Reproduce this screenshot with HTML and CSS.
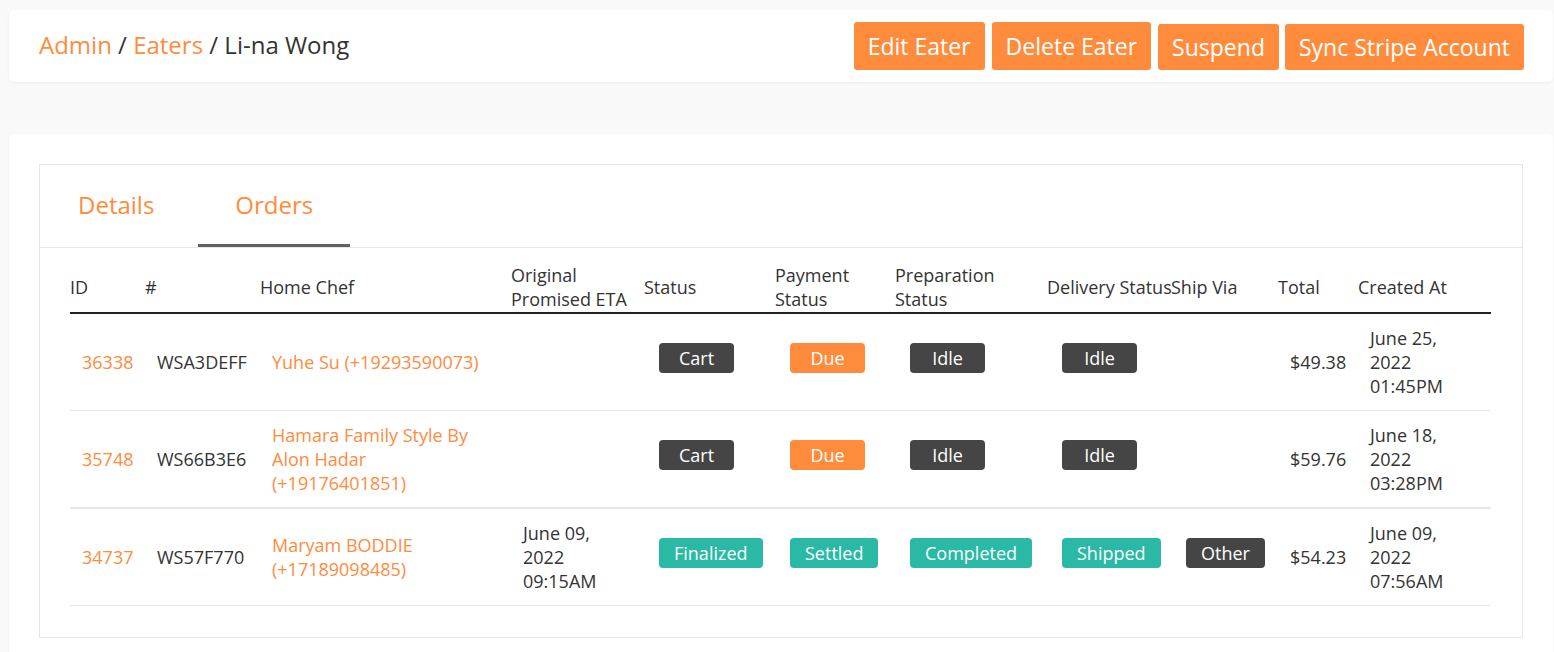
FILE: index.html
```html
<!DOCTYPE html>
<html>
<head>
<meta charset="utf-8">
<link rel="stylesheet" href="styles.css">
</head>
<body>
<div class="page">
  <header class="topbar">
    <div class="crumbs"><a class="link">Admin</a> / <a class="link">Eaters</a> / Li-na Wong</div>
    <div class="actions">
      <button class="btn btn-tall">Edit Eater</button>
      <button class="btn btn-tall">Delete Eater</button>
      <button class="btn">Suspend</button>
      <button class="btn">Sync Stripe Account</button>
    </div>
  </header>

  <main class="card">
    <div class="panel">
      <nav class="tabs">
        <div class="tab first">Details</div>
        <div class="tab active">Orders</div>
      </nav>
      <div class="table-wrap">
        <table class="orders">
          <colgroup>
            <col style="width:75px"><col style="width:115px"><col style="width:251px"><col style="width:133px"><col style="width:131px"><col style="width:120px"><col style="width:152px"><col style="width:124px"><col style="width:107px"><col style="width:80px"><col style="width:133px">
          </colgroup>
          <thead>
            <tr>
              <th>ID</th><th>#</th><th>Home Chef</th><th>Original<br>Promised ETA</th><th>Status</th><th>Payment<br>Status</th><th>Preparation<br>Status</th><th>Delivery Status</th><th>Ship Via</th><th>Total</th><th>Created At</th>
            </tr>
          </thead>
          <tbody>
            <tr>
              <td><a class="link">36338</a></td>
              <td>WSA3DEFF</td>
              <td><a class="link">Yuhe Su (+19293590073)</a></td>
              <td></td>
              <td><span class="badge dark">Cart</span></td>
              <td><span class="badge orange">Due</span></td>
              <td><span class="badge dark">Idle</span></td>
              <td><span class="badge dark">Idle</span></td>
              <td></td>
              <td>$49.38</td>
              <td>June 25,<br>2022<br>01:45PM</td>
            </tr>
            <tr class="thick">
              <td><a class="link">35748</a></td>
              <td>WS66B3E6</td>
              <td><a class="link">Hamara Family Style By<br>Alon Hadar<br>(+19176401851)</a></td>
              <td></td>
              <td><span class="badge dark">Cart</span></td>
              <td><span class="badge orange">Due</span></td>
              <td><span class="badge dark">Idle</span></td>
              <td><span class="badge dark">Idle</span></td>
              <td></td>
              <td>$59.76</td>
              <td>June 18,<br>2022<br>03:28PM</td>
            </tr>
            <tr>
              <td><a class="link">34737</a></td>
              <td>WS57F770</td>
              <td><a class="link">Maryam BODDIE<br>(+17189098485)</a></td>
              <td>June 09,<br>2022<br>09:15AM</td>
              <td><span class="badge teal">Finalized</span></td>
              <td><span class="badge teal">Settled</span></td>
              <td><span class="badge teal">Completed</span></td>
              <td><span class="badge teal">Shipped</span></td>
              <td><span class="badge dark">Other</span></td>
              <td>$54.23</td>
              <td>June 09,<br>2022<br>07:56AM</td>
            </tr>
          </tbody>
        </table>
      </div>
    </div>
  </main>
</div>
</body>
</html>
```

FILE: styles.css
```css
* { box-sizing: border-box; }
html, body { margin: 0; padding: 0; }
body {
  background: #f9f9f9;
  font-family: "Open Sans", "Noto Sans", sans-serif;
  color: #333;
  font-size: 18px;
  overflow: hidden;
}
.page {
  padding: 10px 1px 0 9px;
}
.link { color: #ff8b3d; text-decoration: none; }

.topbar {
  background: #fff;
  border-radius: 5px;
  box-shadow: 0 1px 3px rgba(0,0,0,0.06);
  height: 72px;
  display: flex;
  align-items: center;
  justify-content: space-between;
  padding: 0 29px 0 30px;
}
.crumbs {
  font-size: 24px;
  color: #333;
  margin-top: -4px;
}
.actions {
  display: flex;
  align-items: center;
  gap: 6px;
}
.btn {
  background: #ff8b3d;
  color: #fff;
  border: none;
  border-radius: 3px;
  font-family: "Open Sans", "Noto Sans", sans-serif;
  font-size: 23px;
  height: 46px;
  padding: 0 14px;
  margin-top: 2px;
}
.btn-tall {
  height: 48px;
  margin-top: 0;
  margin-right: 1px;
}

.card {
  background: #fff;
  border-radius: 5px;
  margin-top: 52px;
  padding: 30px 30px 30px 30px;
  min-height: 540px;
  box-shadow: 0 1px 3px rgba(0,0,0,0.04);
}
.panel {
  border: 1px solid #e4e7ea;
  padding-bottom: 31px;
}
.tabs {
  display: flex;
  border-bottom: 1px solid #e4e7ea;
  height: 83px;
}
.tab {
  font-size: 24px;
  color: #ff8b3d;
  padding: 0 37px;
  line-height: 80px;
  height: 82px;
}
.tab.first {
  padding: 0 44px 0 38px;
}
.tab.active {
  border-bottom: 3px solid #5f6166;
}
.table-wrap {
  padding: 15px 31px 0 30px;
}
.orders {
  width: 1421px;
  table-layout: fixed;
  border-collapse: collapse;
}
.orders th {
  text-align: left;
  font-weight: 400;
  padding: 0;
  line-height: 24px;
  vertical-align: middle;
  border-bottom: 2px solid #222;
  height: 50px;
  padding-bottom: 1px;
  white-space: nowrap;
}
.orders td {
  padding: 12px 12px;
  line-height: 24px;
  vertical-align: middle;
  border-bottom: 1px solid #e4e7ea;
  height: 97px;
}
.orders tr.thick td {
  border-bottom: 2px solid #e4e7ea;
}
.badge {
  display: inline-block;
  min-width: 75px;
  height: 30px;
  line-height: 30px;
  padding: 0 15px;
  border-radius: 4px;
  color: #fff;
  font-size: 18px;
  text-align: center;
  margin-left: 3px;
  margin-bottom: 9px;
  white-space: nowrap;
  vertical-align: middle;
}
.badge.dark { background: #454545; }
.badge.orange { background: #ff8b3d; }
.badge.teal { background: #2ab9a5; }
```
